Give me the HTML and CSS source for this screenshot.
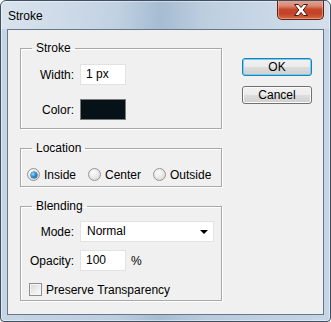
FILE: index.html
```html
<!DOCTYPE html>
<html lang="en">
<head>
  <meta charset="UTF-8" />
  <title>Stroke</title>
  <link rel="stylesheet" href="styles.css">
</head>
<body>
  <div class="window">
    <div class="titlebar">
      <span class="title">Stroke</span>
      <button class="close" aria-label="Close">
        <svg width="16" height="12" viewBox="0 0 16 12">
          <path d="M1.5 0.5h4L8 3.5l2.5-3h4l-4.3 5.5 4.3 5.5h-4L8 8.5l-2.5 3h-4l4.3-5.5z" fill="#fff" stroke="#4a1610" stroke-width="1" stroke-linejoin="round"/>
        </svg>
      </button>
    </div>
    <div class="client">
      <div class="groups">
        <fieldset class="group">
          <legend>Stroke</legend>
          <div class="group-body stroke-body">
            <div class="field">
              <label>Width:</label>
              <span class="textbox">1 px</span>
            </div>
            <div class="field">
              <label>Color:</label>
              <span class="swatch"></span>
            </div>
          </div>
        </fieldset>

        <fieldset class="group">
          <legend>Location</legend>
          <div class="group-body location-body">
            <label class="option opt-inside"><span class="radio checked"></span>Inside</label>
            <label class="option opt-center"><span class="radio"></span>Center</label>
            <label class="option"><span class="radio"></span>Outside</label>
          </div>
        </fieldset>

        <fieldset class="group">
          <legend>Blending</legend>
          <div class="group-body blending-body">
            <div class="field">
              <label>Mode:</label>
              <span class="select">Normal<span class="arrow"></span></span>
            </div>
            <div class="field">
              <label>Opacity:</label>
              <span class="textbox">100</span>
              <span class="unit">%</span>
            </div>
            <label class="option check-row"><span class="checkbox"></span>Preserve Transparency</label>
          </div>
        </fieldset>
      </div>

      <div class="actions">
        <button class="btn default">OK</button>
        <button class="btn">Cancel</button>
      </div>
    </div>
  </div>
</body>
</html>
```

FILE: styles.css
```css
html, body {
  margin: 0;
  background: #fff;
}
body {
  font-family: "Liberation Sans", Arial, sans-serif;
  font-size: 12px;
  color: #000;
}
.window {
  width: 331px;
  height: 322px;
  box-sizing: border-box;
  border: 1px solid #3f4f63;
  border-radius: 6px 6px 4px 4px;
  padding: 0 6px 6px;
  background: linear-gradient(90deg, #c6d5e4 0%, #bccde0 35%, #a6bcd2 48%, #b9cbdd 62%, #c6d5e5 100%);
  box-shadow: inset 0 0 0 1px rgba(255,255,255,0.45);
  display: flex;
  flex-direction: column;
  overflow: hidden;
}
.titlebar {
  height: 28px;
  margin: 0 -6px;
  padding: 0 6px 0 7px;
  display: flex;
  align-items: flex-start;
  justify-content: space-between;
  background: linear-gradient(100deg, rgba(255,255,255,0.35) 0%, rgba(255,255,255,0.05) 40%, rgba(255,255,255,0) 50%, rgba(255,255,255,0.1) 70%, rgba(255,255,255,0.25) 100%);
}
.title {
  line-height: 28px;
  margin-top: 1px;
}
.close {
  width: 47px;
  height: 20px;
  margin-top: -1px;
  padding: 0;
  border: 1px solid #5c2219;
  border-top: none;
  border-radius: 0 0 5px 5px;
  background: linear-gradient(#e4a997 0%, #d98b72 30%, #c7472d 50%, #c24127 70%, #d3693f 100%);
  box-shadow: inset 0 0 0 1px rgba(255,200,180,0.5);
  display: flex;
  align-items: center;
  justify-content: center;
}
.close svg {
  display: block;
}
.client {
  flex: 1;
  background: #f0f0f0;
  border: 1px solid #65778c;
  display: flex;
  padding: 11px 11px 0 12px;
}
.groups {
  width: 202px;
  display: flex;
  flex-direction: column;
  gap: 12px;
}
.group {
  margin: 0;
  padding: 0;
  border: 1px solid #a8a8a8;
  box-shadow: inset 1px 1px 0 #fff, 1px 1px 0 #fff;
  min-width: 0;
}
.group legend {
  margin-left: 11px;
  padding: 0 4px;
  line-height: 14px;
}
.stroke-body {
  padding: 9px 0 8px;
  display: flex;
  flex-direction: column;
  gap: 14px;
}
.location-body {
  padding: 13px 0 5px 6px;
  display: flex;
  align-items: center;
}
.blending-body {
  padding: 8px 0 4px;
  display: flex;
  flex-direction: column;
}
.blending-body .field + .field {
  margin-top: 8px;
}
.field {
  display: flex;
  align-items: center;
  gap: 6px;
  height: 21px;
}
.field label {
  width: 53px;
  text-align: right;
}
.textbox {
  width: 46px;
  height: 21px;
  box-sizing: border-box;
  background: #fff;
  border: 1px solid #e2e2e2;
  padding-left: 5px;
  line-height: 19px;
}
.swatch {
  width: 46px;
  height: 21px;
  box-sizing: border-box;
  background: #061118;
  border: 1px solid #7a7a7a;
}
.select {
  width: 134px;
  height: 21px;
  box-sizing: border-box;
  background: #fff;
  border: 1px solid #e2e2e2;
  padding-left: 6px;
  line-height: 19px;
  position: relative;
}
.select .arrow {
  position: absolute;
  right: 5px;
  top: 8px;
  border-left: 4px solid transparent;
  border-right: 4px solid transparent;
  border-top: 4px solid #000;
}
.unit {
  margin-left: -1px;
}
.option {
  display: flex;
  align-items: center;
  gap: 4px;
  height: 13px;
}
.opt-inside {
  width: 61px;
}
.opt-center {
  width: 65px;
}
.radio {
  width: 13px;
  height: 13px;
  box-sizing: border-box;
  border-radius: 50%;
  border: 1px solid #959595;
  background: radial-gradient(circle at 40% 35%, #fdfdfd 0%, #e6e6e6 55%, #cfcfcf 100%);
  display: flex;
  align-items: center;
  justify-content: center;
}
.radio.checked::after {
  content: "";
  width: 6px;
  height: 6px;
  border-radius: 50%;
  background: radial-gradient(circle at 35% 35%, #9fdcff 0%, #2b8fd6 45%, #0d4f8d 100%);
  box-shadow: 0 0 0 0.5px #123e66;
}
.check-row {
  margin-top: 12px;
  margin-left: 8px;
}
.checkbox {
  width: 13px;
  height: 13px;
  box-sizing: border-box;
  border: 1px solid #8e8f8f;
  background: linear-gradient(135deg, #d6d6d6 0%, #efefef 60%, #fafafa 100%);
  box-shadow: inset 0 0 0 1px #f4f4f4;
}
.actions {
  margin-left: 20px;
  padding-top: 17px;
  display: flex;
  flex-direction: column;
  gap: 10px;
}
.btn {
  width: 70px;
  height: 18px;
  padding: 0;
  font: inherit;
  color: #000;
  border: 1px solid #707070;
  border-radius: 3px;
  background: linear-gradient(#f2f2f2 0%, #ebebeb 50%, #dddddd 51%, #cfcfcf 100%);
  box-shadow: inset 0 0 0 1px #fcfcfc;
  line-height: 16px;
}
.btn.default {
  border-color: #2f78b0;
  box-shadow: inset 0 0 0 1px #5fd6fb;
}
```
